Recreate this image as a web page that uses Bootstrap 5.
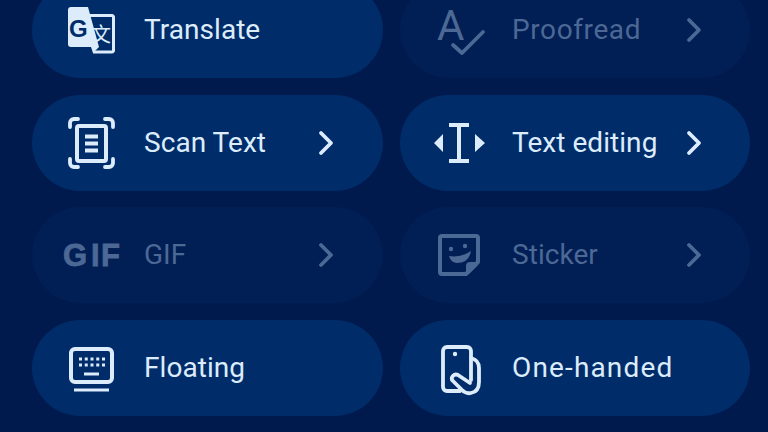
<!DOCTYPE html>
<html lang="en">
<head>
<meta charset="utf-8">
<title>Keyboard tools</title>
<link href="https://cdn.jsdelivr.net/npm/bootstrap@5.3.0/dist/css/bootstrap.min.css" rel="stylesheet">
<style>
html,body{height:432px;overflow:hidden;background:#001a4d}
.sheet{display:flow-root;padding:0 18px 0 32px;margin-top:-18px}
.tile-row{--bs-gutter-x:17px;--bs-gutter-y:16.7px;margin-left:0;margin-right:0}
.tile-col{padding-left:0;padding-right:0}
.tile-col:nth-child(odd){width:351px;margin-right:17px}
.tile-col:nth-child(even){width:350px}
.tool{height:96px;background:#002c6a;color:#dcecfb;font:400 28px/1 Roboto,sans-serif;letter-spacing:.05px}
.tool.off{background:#011e55;color:#4c6894}
.glyph{width:52px;height:52px;margin-left:33px;flex:none;overflow:visible}
.tool-name{margin-left:27px;flex:1 1 auto;white-space:nowrap}
.wide-name{letter-spacing:.6px}
.wider-name{letter-spacing:1.15px}
.chev{width:18px;height:28px;margin-right:48px;flex:none}
.tile-col:nth-child(even) .chev{margin-right:47px}
.ln{fill:none;stroke:currentColor;stroke-width:3.8;stroke-linecap:round;stroke-linejoin:round}
.sq{fill:none;stroke:currentColor;stroke-width:4;stroke-linejoin:round}
.fl{fill:currentColor}
.gl-g{font:700 24px "Liberation Sans",sans-serif;fill:#002c6a}
.gl-w{font:400 20px "Noto Sans CJK SC",sans-serif;fill:currentColor}
.gl-a{font:400 42px Roboto,sans-serif;fill:currentColor}
.gl-gif{font:700 31px "Liberation Sans",sans-serif;fill:currentColor;stroke:currentColor;stroke-width:.8}
</style>
</head>
<body>
<main class="sheet">
<div class="row tile-row">

<div class="col-auto tile-col"><div class="tool rounded-pill d-flex align-items-center">
<svg class="glyph" viewBox="0 0 52 52"><path class="fl" d="M6 3H23L34 43H6a3 3 0 0 1-3-3V6a3 3 0 0 1 3-3z"/><path d="M25 11.500H47a1.500 1.500 0 0 1 1.500 1.500V46.500a1.500 1.500 0 0 1-1.500 1.500H28" fill="none" stroke="currentColor" stroke-width="3"/><path class="fl" d="M26 43H34L28 49z"/><text class="gl-g" x="4" y="33">G</text><text class="gl-w" x="26" y="38">文</text></svg>
<span class="tool-name">Translate</span></div></div>

<div class="col-auto tile-col"><div class="tool off rounded-pill d-flex align-items-center">
<svg class="glyph" viewBox="0 0 52 52"><text class="gl-a" x="4" y="36">A</text><path class="ln" d="M20 41L29 49L50 28"/></svg>
<span class="tool-name wide-name">Proofread</span>
<svg class="chev" viewBox="0 0 18 28"><path class="ln" d="M4 4L14 14L4 24"/></svg></div></div>

<div class="col-auto tile-col"><div class="tool rounded-pill d-flex align-items-center">
<svg class="glyph" viewBox="0 0 52 52"><path class="ln" d="M5 10V6a4 4 0 0 1 4-4h4M40 2h4a4 4 0 0 1 4 4v4M48 42v4a4 4 0 0 1-4 4h-4M13 50H9a4 4 0 0 1-4-4v-4"/><rect class="sq" x="12" y="9" width="29" height="35" rx="2"/><path d="M20 19.500H33M20 26.500H33M20 33.500H33" fill="none" stroke="currentColor" stroke-width="4"/></svg>
<span class="tool-name">Scan Text</span>
<svg class="chev" viewBox="0 0 18 28"><path class="ln" d="M4 4L14 14L4 24"/></svg></div></div>

<div class="col-auto tile-col"><div class="tool rounded-pill d-flex align-items-center">
<svg class="glyph" viewBox="0 0 52 52"><path class="fl" d="M10 17V35L1 26zM42 17V35L52 26z"/><path d="M16 8H36M16 44H36M26 8V44" fill="none" stroke="currentColor" stroke-width="4"/></svg>
<span class="tool-name">Text editing</span>
<svg class="chev" viewBox="0 0 18 28"><path class="ln" d="M4 4L14 14L4 24"/></svg></div></div>

<div class="col-auto tile-col"><div class="tool off rounded-pill d-flex align-items-center">
<svg class="glyph" viewBox="0 0 52 52"><text class="gl-gif" x="-2 26 36" y="37">GIF</text></svg>
<span class="tool-name">GIF</span>
<svg class="chev" viewBox="0 0 18 28"><path class="ln" d="M4 4L14 14L4 24"/></svg></div></div>

<div class="col-auto tile-col"><div class="tool off rounded-pill d-flex align-items-center">
<svg class="glyph" viewBox="0 0 52 52"><path class="sq" d="M9 7H43a2 2 0 0 1 2 2V33L33 45H9a2 2 0 0 1-2-2V9a2 2 0 0 1 2-2z"/><path class="fl" d="M45 33V36L36 45H33V37a4 4 0 0 1 4-4z"/><circle class="fl" cx="18" cy="20" r="2.200"/><circle class="fl" cx="32" cy="17" r="2.200"/><path class="fl" d="M16 27Q28 29 38 22Q36 34 24 34Q18 34 16 27z"/></svg>
<span class="tool-name">Sticker</span>
<svg class="chev" viewBox="0 0 18 28"><path class="ln" d="M4 4L14 14L4 24"/></svg></div></div>

<div class="col-auto tile-col"><div class="tool rounded-pill d-flex align-items-center">
<svg class="glyph" viewBox="0 0 52 52"><rect class="sq" x="6" y="7" width="41" height="33" rx="4"/><path d="M14 17H40M14 23H40" fill="none" stroke="currentColor" stroke-width="3" stroke-dasharray="3 2.750"/><path d="M19 32H34M9 48H44" fill="none" stroke="currentColor" stroke-width="3"/></svg>
<span class="tool-name">Floating</span></div></div>

<div class="col-auto tile-col"><div class="tool rounded-pill d-flex align-items-center">
<svg class="glyph" viewBox="0 0 52 52"><path class="ln" d="M38 38V9a4 4 0 0 0-4-4H14a4 4 0 0 0-4 4V45a4 4 0 0 0 4 4H27"/><path class="ln" d="M38 16q8 2 8 10V40c0 6-2 10-8 11c-4 1-7-1-9-3L19 38q-1-3 2-5q2-1 4 0L37 41"/><circle class="fl" cx="22" cy="12" r="2.200"/></svg>
<span class="tool-name wider-name">One-handed</span></div></div>

</div>
</main>
<script src="https://cdn.jsdelivr.net/npm/bootstrap@5.3.0/dist/js/bootstrap.bundle.min.js"></script>
</body>
</html>
